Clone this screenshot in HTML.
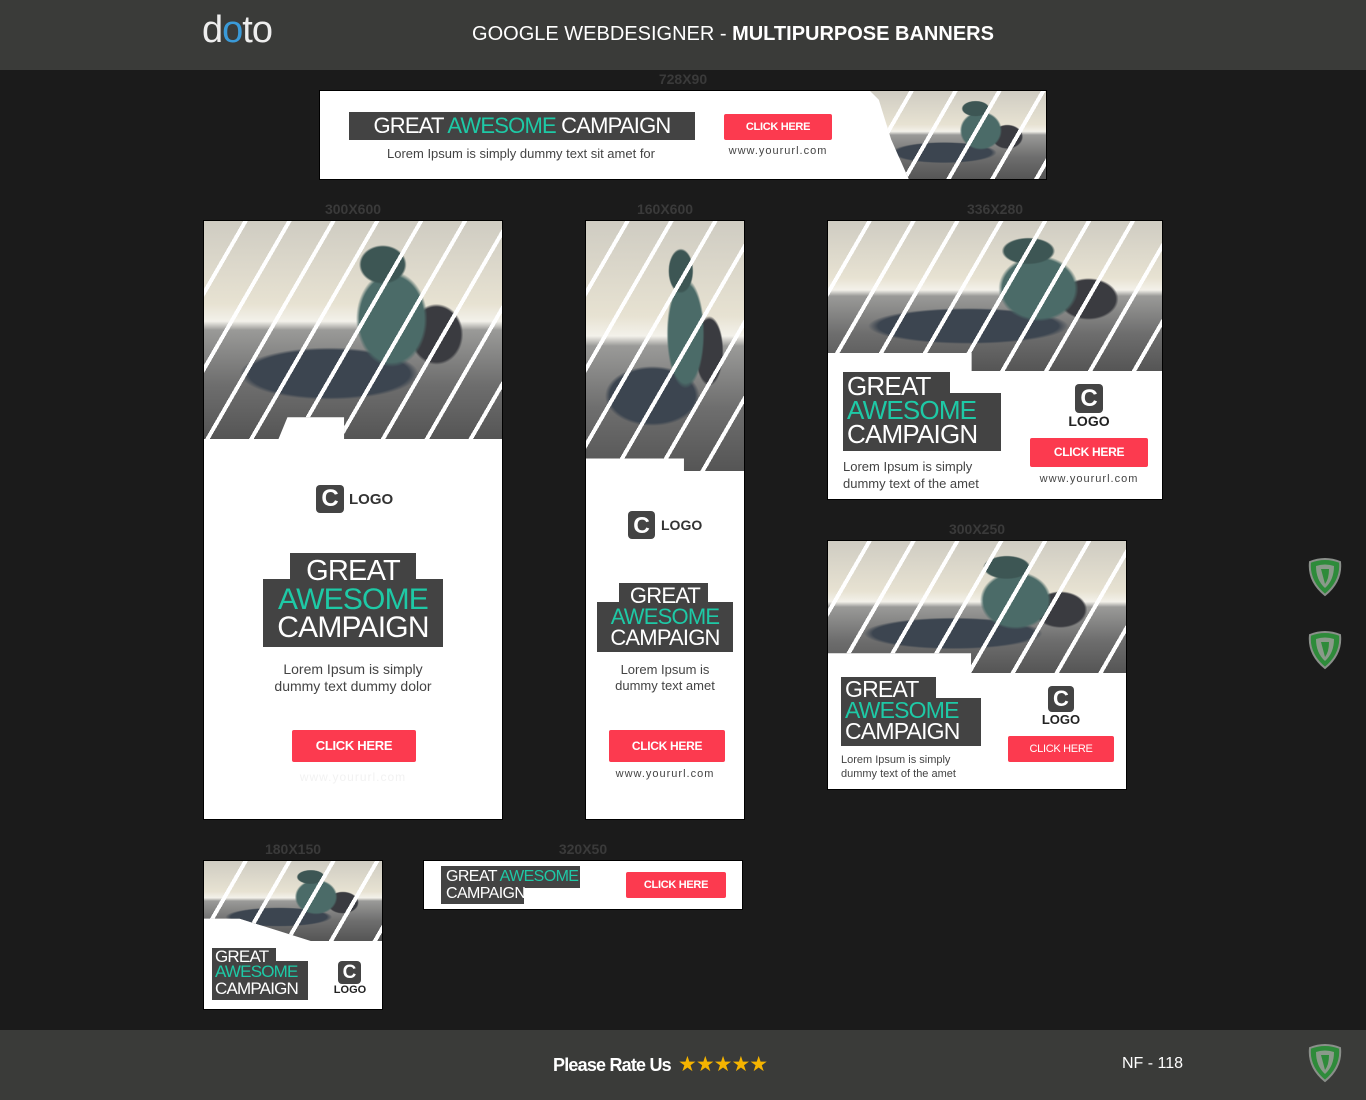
<!DOCTYPE html>
<html><head><meta charset="utf-8"><style>
*{margin:0;padding:0;box-sizing:border-box}
body{width:1366px;height:1100px;background:#1b1b1b;position:relative;overflow:hidden;font-family:"Liberation Sans",sans-serif}
.a{position:absolute}
.hdr{left:0;top:0;width:1366px;height:70px;background:#3a3b39}
.ftr{left:0;top:1030px;width:1366px;height:70px;background:#3a3b39}
.lbl{color:#3a3a3a;font-weight:bold;font-size:14px;text-align:center;width:200px;margin-left:-100px}
.wb{background:#fff;border:1px solid #000}
.ph{background:
 repeating-linear-gradient(120deg,transparent 0 34px,#fff 34px 38px),
 radial-gradient(ellipse 8% 9% at 60% 20%,#3d5654 0 90%,transparent 100%),
 radial-gradient(ellipse 12% 22% at 63% 45%,#4b6b68 0 90%,transparent 100%),
 radial-gradient(ellipse 9% 14% at 78% 52%,#3a3b40 0 90%,transparent 100%),
 radial-gradient(ellipse 30% 12% at 42% 70%,#3c4550 0 90%,transparent 100%),
 linear-gradient(#cfccc2 0%,#e7e2d2 38%,#f3f1ea 46%,#9a9a98 50%,#6e6e6e 75%,#555 100%);}
.hb{background:#434343}
.ht{color:#fff;text-align:center;white-space:nowrap;letter-spacing:-0.8px}
.tl{color:#1ec9a6}
.btn{background:#fc3a4f;color:#fff;font-weight:bold;text-align:center;border-radius:2px;letter-spacing:-0.3px}
.gr{color:#444;text-align:center;white-space:nowrap}
.c{background:#444;border-radius:4px;color:#fff;font-weight:bold;text-align:center}
</style></head><body>
<div class="a hdr"></div>
<div class="a" style="left:202px;top:9px;font-size:38px;color:#eee;letter-spacing:-1px">d<span style="color:#3a9ad8">o</span>t<span style="color:#eee">o</span></div>
<div class="a" style="left:433px;top:23px;width:600px;text-align:center;color:#fff;font-size:20px">GOOGLE WEBDESIGNER - <b>MULTIPURPOSE BANNERS</b></div>

<!-- 728x90 -->
<div class="a lbl" style="left:683px;top:71px">728X90</div>
<div class="a wb" style="left:319px;top:90px;width:728px;height:90px"></div>
<div class="a ph" style="left:870px;top:91px;width:176px;height:88px;clip-path:polygon(0 0,100% 0,100% 100%,22% 100%,12% 55%,5% 10%)"></div>
<div class="a hb" style="left:349px;top:112px;width:346px;height:28px"></div>
<div class="a ht" style="left:349px;top:113px;width:346px;font-size:22px">GREAT <span class="tl">AWESOME</span> CAMPAIGN</div>
<div class="a gr" style="left:341px;top:146px;width:360px;font-size:13px">Lorem Ipsum is simply dummy text sit amet for</div>
<div class="a btn" style="left:724px;top:114px;width:108px;height:26px;line-height:26px;font-size:11px">CLICK HERE</div>
<div class="a gr" style="left:718px;top:145px;width:120px;font-size:11px;letter-spacing:1px">www.yoururl.com</div>

<!-- 300x600 -->
<div class="a lbl" style="left:353px;top:201px">300X600</div>
<div class="a wb" style="left:203px;top:220px;width:300px;height:600px"></div>
<div class="a ph" style="left:204px;top:221px;width:298px;height:218px;clip-path:polygon(0 0,100% 0,100% 100%,47% 100%,47% 90%,28% 90%,25% 100%,0 100%)"></div>
<div class="a c" style="left:316px;top:485px;width:28px;height:28px;font-size:24px;line-height:28px">C</div>
<div class="a" style="left:349px;top:491px;font-size:15px;font-weight:bold;color:#333">LOGO</div>
<div class="a hb" style="left:290px;top:553px;width:126px;height:30px"></div>
<div class="a hb" style="left:263px;top:579px;width:180px;height:68px"></div>
<div class="a ht" style="left:263px;top:556px;width:180px;font-size:29px;line-height:30px">GREAT</div>
<div class="a ht tl" style="left:263px;top:585px;width:180px;font-size:30px;line-height:30px">AWESOME</div>
<div class="a ht" style="left:263px;top:613px;width:180px;font-size:30px;line-height:30px">CAMPAIGN</div>
<div class="a gr" style="left:204px;top:661px;width:298px;font-size:14px;line-height:17px">Lorem Ipsum is simply<br>dummy text dummy dolor</div>
<div class="a btn" style="left:292px;top:730px;width:124px;height:32px;line-height:32px;font-size:13px">CLICK HERE</div>
<div class="a gr" style="left:204px;top:770px;width:298px;font-size:12px;color:#f2f2f2;letter-spacing:1px">www.yoururl.com</div>

<!-- 160x600 -->
<div class="a lbl" style="left:665px;top:201px">160X600</div>
<div class="a wb" style="left:585px;top:220px;width:160px;height:600px"></div>
<div class="a ph" style="left:586px;top:221px;width:158px;height:250px;clip-path:polygon(0 0,100% 0,100% 100%,62% 100%,62% 95%,0 95%)"></div>
<div class="a c" style="left:628px;top:511px;width:27px;height:28px;font-size:23px;line-height:28px">C</div>
<div class="a" style="left:661px;top:517px;font-size:14px;font-weight:bold;color:#333">LOGO</div>
<div class="a hb" style="left:619px;top:583px;width:89px;height:22px"></div>
<div class="a hb" style="left:597px;top:602px;width:136px;height:50px"></div>
<div class="a ht" style="left:597px;top:585px;width:136px;font-size:22px;line-height:22px">GREAT</div>
<div class="a ht tl" style="left:597px;top:606px;width:136px;font-size:22px;line-height:22px">AWESOME</div>
<div class="a ht" style="left:597px;top:627px;width:136px;font-size:22px;line-height:22px">CAMPAIGN</div>
<div class="a gr" style="left:586px;top:662px;width:158px;font-size:13px;line-height:16px">Lorem Ipsum is<br>dummy text amet</div>
<div class="a btn" style="left:609px;top:730px;width:116px;height:32px;line-height:32px;font-size:12px">CLICK HERE</div>
<div class="a gr" style="left:586px;top:768px;width:158px;font-size:11px;letter-spacing:1px">www.yoururl.com</div>

<!-- 336x280 -->
<div class="a lbl" style="left:995px;top:201px">336X280</div>
<div class="a wb" style="left:827px;top:220px;width:336px;height:280px"></div>
<div class="a ph" style="left:828px;top:221px;width:334px;height:150px;clip-path:polygon(0 0,100% 0,100% 100%,43% 100%,43% 88%,0 88%)"></div>
<div class="a hb" style="left:843px;top:372px;width:107px;height:24px"></div>
<div class="a hb" style="left:843px;top:393px;width:158px;height:58px"></div>
<div class="a ht" style="left:847px;top:374px;font-size:26px;line-height:24px;text-align:left">GREAT</div>
<div class="a ht tl" style="left:847px;top:398px;font-size:26px;line-height:24px;text-align:left">AWESOME</div>
<div class="a ht" style="left:847px;top:422px;font-size:26px;line-height:24px;text-align:left">CAMPAIGN</div>
<div class="a gr" style="left:843px;top:458px;font-size:13px;line-height:17px;text-align:left">Lorem Ipsum is simply<br>dummy text of the amet</div>
<div class="a c" style="left:1075px;top:384px;width:28px;height:29px;font-size:24px;line-height:29px">C</div>
<div class="a" style="left:1030px;top:413px;width:118px;text-align:center;font-size:14px;font-weight:bold;color:#222">LOGO</div>
<div class="a btn" style="left:1030px;top:438px;width:118px;height:29px;line-height:29px;font-size:12px">CLICK HERE</div>
<div class="a gr" style="left:1030px;top:473px;width:118px;font-size:11px;letter-spacing:1px">www.yoururl.com</div>

<!-- 300x250 -->
<div class="a lbl" style="left:977px;top:521px">300X250</div>
<div class="a wb" style="left:827px;top:540px;width:300px;height:250px"></div>
<div class="a ph" style="left:828px;top:541px;width:298px;height:132px;clip-path:polygon(0 0,100% 0,100% 100%,48% 100%,48% 85%,0 85%)"></div>
<div class="a hb" style="left:841px;top:677px;width:95px;height:22px"></div>
<div class="a hb" style="left:841px;top:698px;width:140px;height:48px"></div>
<div class="a ht" style="left:845px;top:679px;font-size:23px;line-height:21px;text-align:left">GREAT</div>
<div class="a ht tl" style="left:845px;top:700px;font-size:23px;line-height:21px;text-align:left">AWESOME</div>
<div class="a ht" style="left:845px;top:721px;font-size:23px;line-height:21px;text-align:left">CAMPAIGN</div>
<div class="a gr" style="left:841px;top:753px;font-size:11px;line-height:14px;text-align:left">Lorem Ipsum is simply<br>dummy text of the amet</div>
<div class="a c" style="left:1048px;top:686px;width:26px;height:26px;font-size:22px;line-height:26px">C</div>
<div class="a" style="left:1008px;top:712px;width:106px;text-align:center;font-size:13px;font-weight:bold;color:#222">LOGO</div>
<div class="a btn" style="left:1008px;top:736px;width:106px;height:26px;line-height:26px;font-size:11px;font-weight:normal">CLICK HERE</div>

<!-- 180x150 -->
<div class="a lbl" style="left:293px;top:841px">180X150</div>
<div class="a wb" style="left:203px;top:860px;width:180px;height:150px"></div>
<div class="a ph" style="left:204px;top:861px;width:178px;height:80px;clip-path:polygon(0 0,100% 0,100% 100%,60% 100%,20% 72%,0 72%)"></div>
<div class="a hb" style="left:212px;top:948px;width:64px;height:18px"></div>
<div class="a hb" style="left:212px;top:961px;width:96px;height:39px"></div>
<div class="a ht" style="left:215px;top:948px;font-size:17px;line-height:17px;text-align:left">GREAT</div>
<div class="a ht tl" style="left:215px;top:964px;font-size:17px;line-height:16px;text-align:left">AWESOME</div>
<div class="a ht" style="left:215px;top:980px;font-size:17px;line-height:17px;text-align:left">CAMPAIGN</div>
<div class="a c" style="left:338px;top:961px;width:23px;height:23px;font-size:19px;line-height:23px">C</div>
<div class="a" style="left:325px;top:984px;width:50px;text-align:center;font-size:11px;font-weight:bold;color:#222">LOGO</div>

<!-- 320x50 -->
<div class="a lbl" style="left:583px;top:841px">320X50</div>
<div class="a wb" style="left:423px;top:860px;width:320px;height:50px"></div>
<div class="a hb" style="left:441px;top:866px;width:139px;height:22px"></div>
<div class="a hb" style="left:441px;top:886px;width:83px;height:18px"></div>
<div class="a ht" style="left:446px;top:868px;font-size:16px;line-height:18px;text-align:left;letter-spacing:-0.6px">GREAT <span class="tl">AWESOME</span></div>
<div class="a ht" style="left:446px;top:885px;font-size:16px;line-height:18px;text-align:left;letter-spacing:-0.6px">CAMPAIGN</div>
<div class="a btn" style="left:626px;top:872px;width:100px;height:26px;line-height:26px;font-size:11px">CLICK HERE</div>

<!-- shields -->
<svg class="a" style="left:1307px;top:557px" width="36" height="40" viewBox="0 0 36 40"><path d="M3 5 Q18 -1 33 5 Q35 24 18 38 Q1 24 3 5Z" fill="#2e8b3a" stroke="#8a8f8a" stroke-width="2"/><path d="M9 9 Q18 6 27 9 Q27 23 18 31 Q9 23 9 9Z" fill="#8a9a8a"/><path d="M14 12 L22 12 Q22 22 18 27 Z" fill="#2e8b3a"/></svg>
<svg class="a" style="left:1307px;top:630px" width="36" height="40" viewBox="0 0 36 40"><path d="M3 5 Q18 -1 33 5 Q35 24 18 38 Q1 24 3 5Z" fill="#2e8b3a" stroke="#8a8f8a" stroke-width="2"/><path d="M9 9 Q18 6 27 9 Q27 23 18 31 Q9 23 9 9Z" fill="#8a9a8a"/><path d="M14 12 L22 12 Q22 22 18 27 Z" fill="#2e8b3a"/></svg>

<div class="a ftr"></div>
<div class="a" style="left:553px;top:1055px;color:#fff;font-weight:bold;font-size:18px;letter-spacing:-0.8px">Please Rate Us</div>
<div class="a" style="left:678px;top:1052px;color:#f5b400;font-size:21px;letter-spacing:-1px">★★★★★</div>
<div class="a" style="left:1122px;top:1055px;color:#fff;font-size:16px">NF - 118</div>
<svg class="a" style="left:1307px;top:1043px" width="36" height="40" viewBox="0 0 36 40"><path d="M3 5 Q18 -1 33 5 Q35 24 18 38 Q1 24 3 5Z" fill="#2e8b3a" stroke="#8a8f8a" stroke-width="2"/><path d="M9 9 Q18 6 27 9 Q27 23 18 31 Q9 23 9 9Z" fill="#8a9a8a"/><path d="M14 12 L22 12 Q22 22 18 27 Z" fill="#2e8b3a"/></svg>
</body></html>
